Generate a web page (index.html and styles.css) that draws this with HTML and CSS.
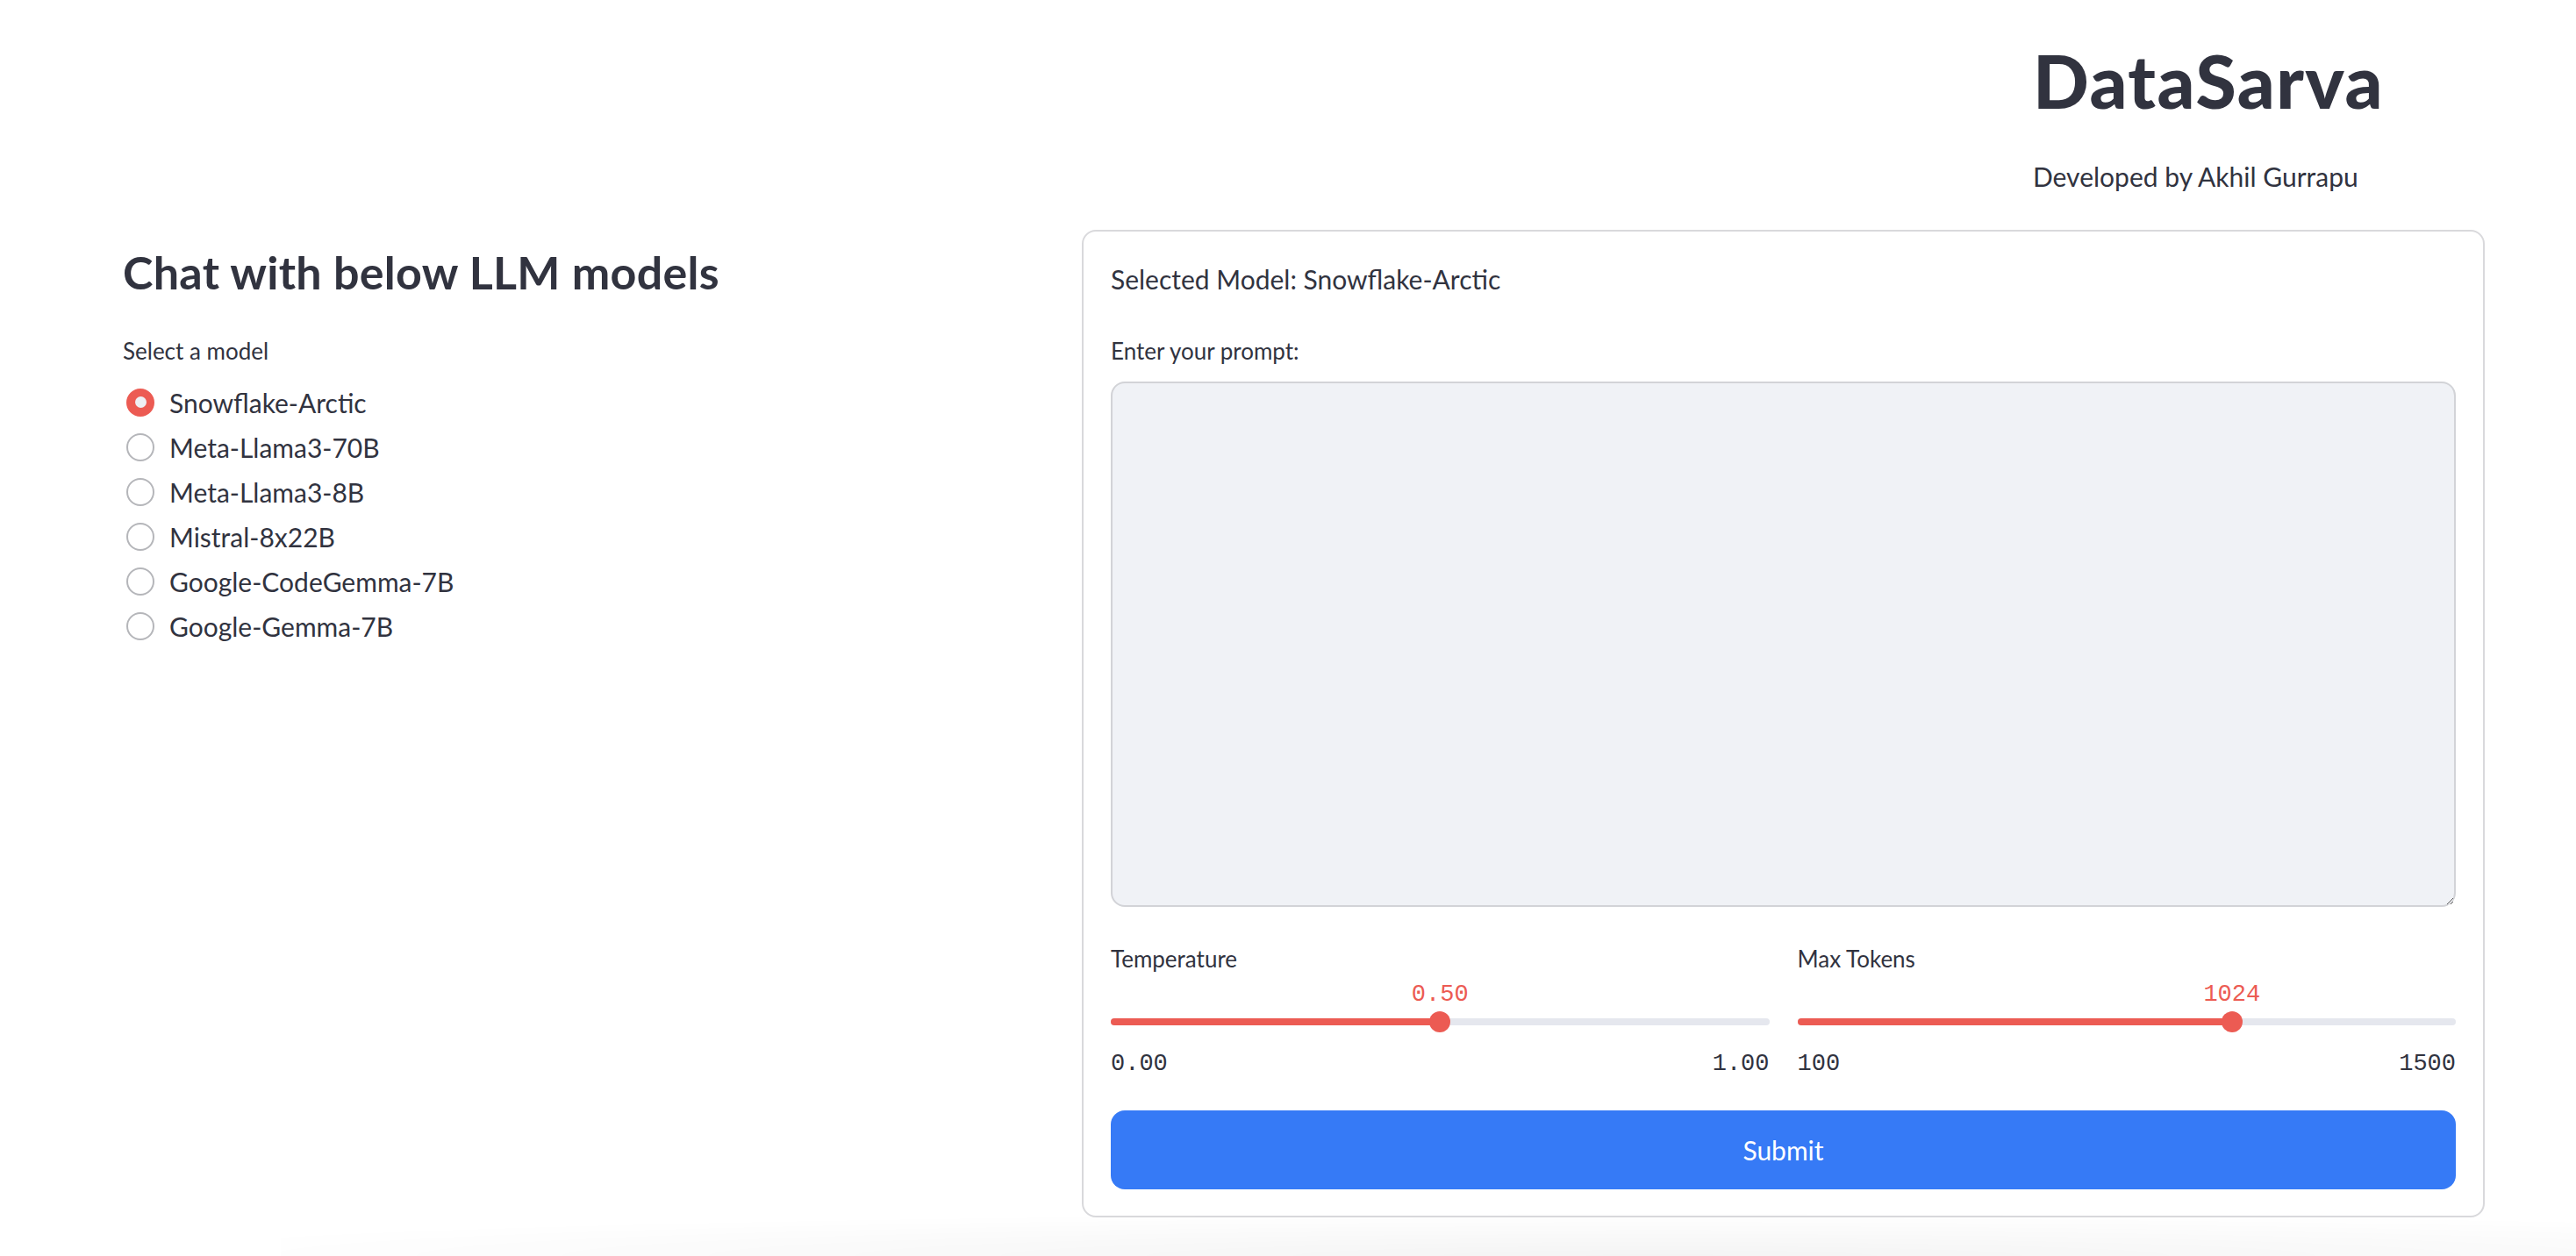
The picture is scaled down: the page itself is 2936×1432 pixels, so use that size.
FILE: index.html
```html
<!DOCTYPE html>
<html lang="en">
<head>
<meta charset="utf-8">
<title>DataSarva</title>
<link rel="stylesheet" href="styles.css">
</head>
<body>
<div class="page">
  <header class="top">
    <div class="top-spacer"></div>
    <div class="brand">
      <h1 class="brand-title">DataSarva</h1>
      <p class="brand-sub">Developed by Akhil Gurrapu</p>
    </div>
  </header>

  <main class="main">
    <section class="left">
      <h3 class="left-title">Chat with below LLM models</h3>
      <div class="field-label">Select a model</div>
      <div class="radios">
        <label class="radio is-checked"><span class="radio-dot"></span><span class="radio-text">Snowflake-Arctic</span></label>
        <label class="radio"><span class="radio-dot"></span><span class="radio-text">Meta-Llama3-70B</span></label>
        <label class="radio"><span class="radio-dot"></span><span class="radio-text">Meta-Llama3-8B</span></label>
        <label class="radio"><span class="radio-dot"></span><span class="radio-text">Mistral-8x22B</span></label>
        <label class="radio"><span class="radio-dot"></span><span class="radio-text">Google-CodeGemma-7B</span></label>
        <label class="radio"><span class="radio-dot"></span><span class="radio-text">Google-Gemma-7B</span></label>
      </div>
    </section>

    <section class="card">
      <p class="selected">Selected Model: Snowflake-Arctic</p>
      <div class="field-label card-label">Enter your prompt:</div>
      <textarea class="prompt"></textarea>

      <div class="sliders">
        <div class="slider" style="--p: 50%;">
          <div class="field-label">Temperature</div>
          <div class="slider-value-row"><span class="slider-value">0.50</span></div>
          <div class="slider-track"><div class="slider-fill"></div><div class="slider-thumb"></div></div>
          <div class="slider-range"><span>0.00</span><span>1.00</span></div>
        </div>
        <div class="slider" style="--p: 66%;">
          <div class="field-label">Max Tokens</div>
          <div class="slider-value-row"><span class="slider-value">1024</span></div>
          <div class="slider-track"><div class="slider-fill"></div><div class="slider-thumb"></div></div>
          <div class="slider-range"><span>100</span><span>1500</span></div>
        </div>
      </div>

      <button class="submit" type="button">Submit</button>
    </section>
  </main>
</div>
<div class="bottom-fade"></div>
</body>
</html>
```

FILE: styles.css
```css
* { box-sizing: border-box; }

html, body {
  margin: 0;
  padding: 0;
  background: #ffffff;
}

body {
  font-family: Lato, "Noto Sans", sans-serif;
  color: #31333f;
  overflow: hidden;
}

.page {
  padding: 0 104px 0 140px;
}

/* header */
.top {
  display: grid;
  grid-template-columns: 1fr 515px;
}

.brand-title {
  margin: 42px 0 0;
  font-size: 84px;
  line-height: 100px;
  font-weight: 900;
  letter-spacing: 1.5px;
}

.brand-sub {
  margin: 39px 0 0;
  font-size: 30px;
  line-height: 40px;
  font-weight: 400;
}

/* main */
.main {
  margin-top: 41px;
  display: grid;
  grid-template-columns: 1061px 1599px;
  gap: 32px;
  align-items: start;
}

.left-title {
  margin: 16px 0 0;
  font-size: 52px;
  line-height: 64px;
  font-weight: 700;
  letter-spacing: 0.3px;
}

.field-label {
  font-size: 26px;
  line-height: 36px;
  font-weight: 400;
}

.left .field-label {
  margin-top: 40px;
}

.radios {
  margin-top: 15px;
  display: flex;
  flex-direction: column;
}

.radio {
  display: flex;
  align-items: center;
  height: 51px;
  font-size: 30px;
  line-height: 40px;
}

.radio-dot {
  width: 32px;
  height: 32px;
  margin-left: 4px;
  margin-right: 17px;
  border-radius: 50%;
  border: 2px solid #b5b6ba;
  background: #ffffff;
  flex: none;
  display: flex;
  align-items: center;
  justify-content: center;
}

.radio.is-checked .radio-dot {
  border-color: #ec5b53;
  background: #ec5b53;
}

.radio.is-checked .radio-dot::after {
  content: "";
  width: 13px;
  height: 13px;
  border-radius: 50%;
  background: #eef0f4;
}

/* card */
.card {
  border: 2px solid #d9d9dc;
  border-radius: 16px;
  padding: 34px 31px 30px;
}

.selected {
  margin: 0;
  font-size: 30px;
  line-height: 40px;
}

.card-label {
  margin-top: 44px;
}

.prompt {
  display: block;
  width: 100%;
  height: 599px;
  margin-top: 17px;
  background: #f0f2f6;
  border: 2px solid #d2d3d7;
  border-radius: 16px;
  resize: vertical;
  font-family: inherit;
  font-size: 30px;
  outline: none;
}

.sliders {
  margin-top: 41px;
  display: grid;
  grid-template-columns: 1fr 1fr;
  gap: 32px;
}

.slider-value-row {
  margin-top: 7px;
  height: 32px;
  padding-left: var(--p);
}

.slider-value {
  display: inline-block;
  transform: translateX(-50%);
  font-family: "Liberation Mono", "DejaVu Sans Mono", monospace;
  font-size: 27px;
  line-height: 32px;
  color: #ec5b53;
}

.slider-track {
  position: relative;
  margin-top: 3px;
  height: 24px;
}

.slider-track::before {
  content: "";
  position: absolute;
  left: 0;
  right: 0;
  top: 8px;
  height: 8px;
  border-radius: 4px;
  background: #e5e7ee;
}

.slider-fill {
  position: absolute;
  left: 0;
  top: 8px;
  height: 8px;
  width: var(--p);
  border-radius: 4px;
  background: #ec5b53;
}

.slider-thumb {
  position: absolute;
  top: 0;
  left: var(--p);
  width: 24px;
  height: 24px;
  margin-left: -12px;
  border-radius: 50%;
  background: #ec5b53;
}

.slider-range {
  margin-top: 20px;
  display: flex;
  justify-content: space-between;
  font-family: "Liberation Mono", "DejaVu Sans Mono", monospace;
  font-size: 27px;
  line-height: 32px;
  color: #31333f;
}

.submit {
  display: block;
  width: 100%;
  height: 90px;
  margin-top: 37px;
  border: none;
  border-radius: 16px;
  background: #367af6;
  color: #ffffff;
  font-family: inherit;
  font-size: 30px;
  font-weight: 400;
}

.bottom-fade {
  position: fixed;
  left: 320px;
  right: 0;
  bottom: 0;
  height: 50px;
  pointer-events: none;
  background: radial-gradient(ellipse 70% 100% at 60% 100%, rgba(0, 0, 0, 0.045), rgba(0, 0, 0, 0) 100%);
}
```
